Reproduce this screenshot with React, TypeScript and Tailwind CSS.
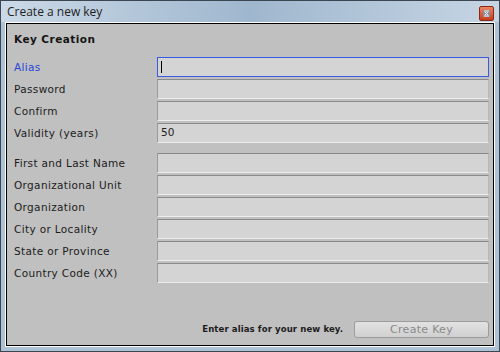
import React from 'react';

const GROUP_ONE = ['Alias', 'Password', 'Confirm', 'Validity (years)'];
const GROUP_TWO = [
  'First and Last Name',
  'Organizational Unit',
  'Organization',
  'City or Locality',
  'State or Province',
  'Country Code (XX)',
];

function Field({ label, value, focused }: { label: string; value?: string; focused?: boolean }) {
  return (
    <div className="flex items-center h-[20px]">
      <div
        className={`w-[143px] text-[10.5px] leading-none tracking-[0.35px] ${focused ? 'text-[#2646d8]' : 'text-[#1c1c1c]'}`}
      >
        {label}
      </div>
      <div
        className={`relative flex-1 h-[20px] flex items-center pl-[3px] text-[10.5px] text-[#1c1c1c] bg-[#d4d4d4] border ${
          focused
            ? 'border-[#3a5ae6]'
            : 'border-t-[#8a8a8a] border-l-[#9a9a9a] border-b-[#ececec] border-r-[#b8b8b8]'
        }`}
      >
        {focused && <div className="w-px h-[12px] bg-black" />}
        {value}
      </div>
    </div>
  );
}

export default function App() {
  return (
    <div
      className="w-[500px] h-[352px] border border-[#3c4650] bg-[#aec2d6] flex flex-col"
      style={{ fontFamily: '"DejaVu Sans", Verdana, sans-serif' }}
    >
      {/* title bar */}
      <div className="h-[21px] flex items-center justify-between pl-[6px] pr-[5px] bg-gradient-to-r from-[#cbd9e7] via-[#9fb7ce] to-[#c6d5e4]">
        <span
          className="text-[12px] text-[#1e1e1e] leading-none"
          style={{ fontFamily: '"Open Sans", "Liberation Sans", sans-serif' }}
        >
          Create a new key
        </span>
        <div className="w-[15px] h-[15px] mt-[3px] rounded-[2px] border border-[#8a2a14] bg-gradient-to-b from-[#ec8464] to-[#c63a18] flex items-center justify-center">
          <svg width="7" height="7" viewBox="0 0 7 7">
            <rect x="0" y="0" width="7" height="7" fill="#8c8c9c" />
            <path d="M1 1h5M1 6h5M2 2l3 3M5 2l-3 3" stroke="#f2f2f2" strokeWidth="1" />
          </svg>
        </div>
      </div>

      {/* content */}
      <div className="flex-1 mx-[4px] mb-[4px] border border-white">
        <div className="h-full border border-black bg-[#c0c0c0] flex flex-col pl-[7px] pr-[4px] pt-[9px] pb-[7px]">
          <div className="h-[14px] flex items-center text-[10.5px] font-bold text-[#141414] tracking-[0.45px]">
            Key Creation
          </div>

          <div className="mt-[10px] flex flex-col gap-[2px]">
            {GROUP_ONE.map((l, i) => (
              <Field key={l} label={l} focused={i === 0} value={l === 'Validity (years)' ? '50' : undefined} />
            ))}
          </div>

          <div className="mt-[10px] flex flex-col gap-[2px]">
            {GROUP_TWO.map((l) => (
              <Field key={l} label={l} />
            ))}
          </div>

          <div className="mt-auto flex items-center justify-end gap-[11px]">
            <span
              className="text-[9.5px] font-bold text-[#1c1c1c] tracking-[0.1px]"
              style={{ fontFamily: '"DejaVu Sans Condensed", "DejaVu Sans", sans-serif' }}
            >
              Enter alias for your new key.
            </span>
            <button className="w-[135px] h-[17px] rounded-[3px] border border-[#9c9c9c] bg-gradient-to-b from-[#e2e2e2] to-[#d0d0d0] text-[11px] text-[#8a8a8a] leading-none tracking-[0.3px]">
              Create Key
            </button>
          </div>
        </div>
      </div>
    </div>
  );
}
